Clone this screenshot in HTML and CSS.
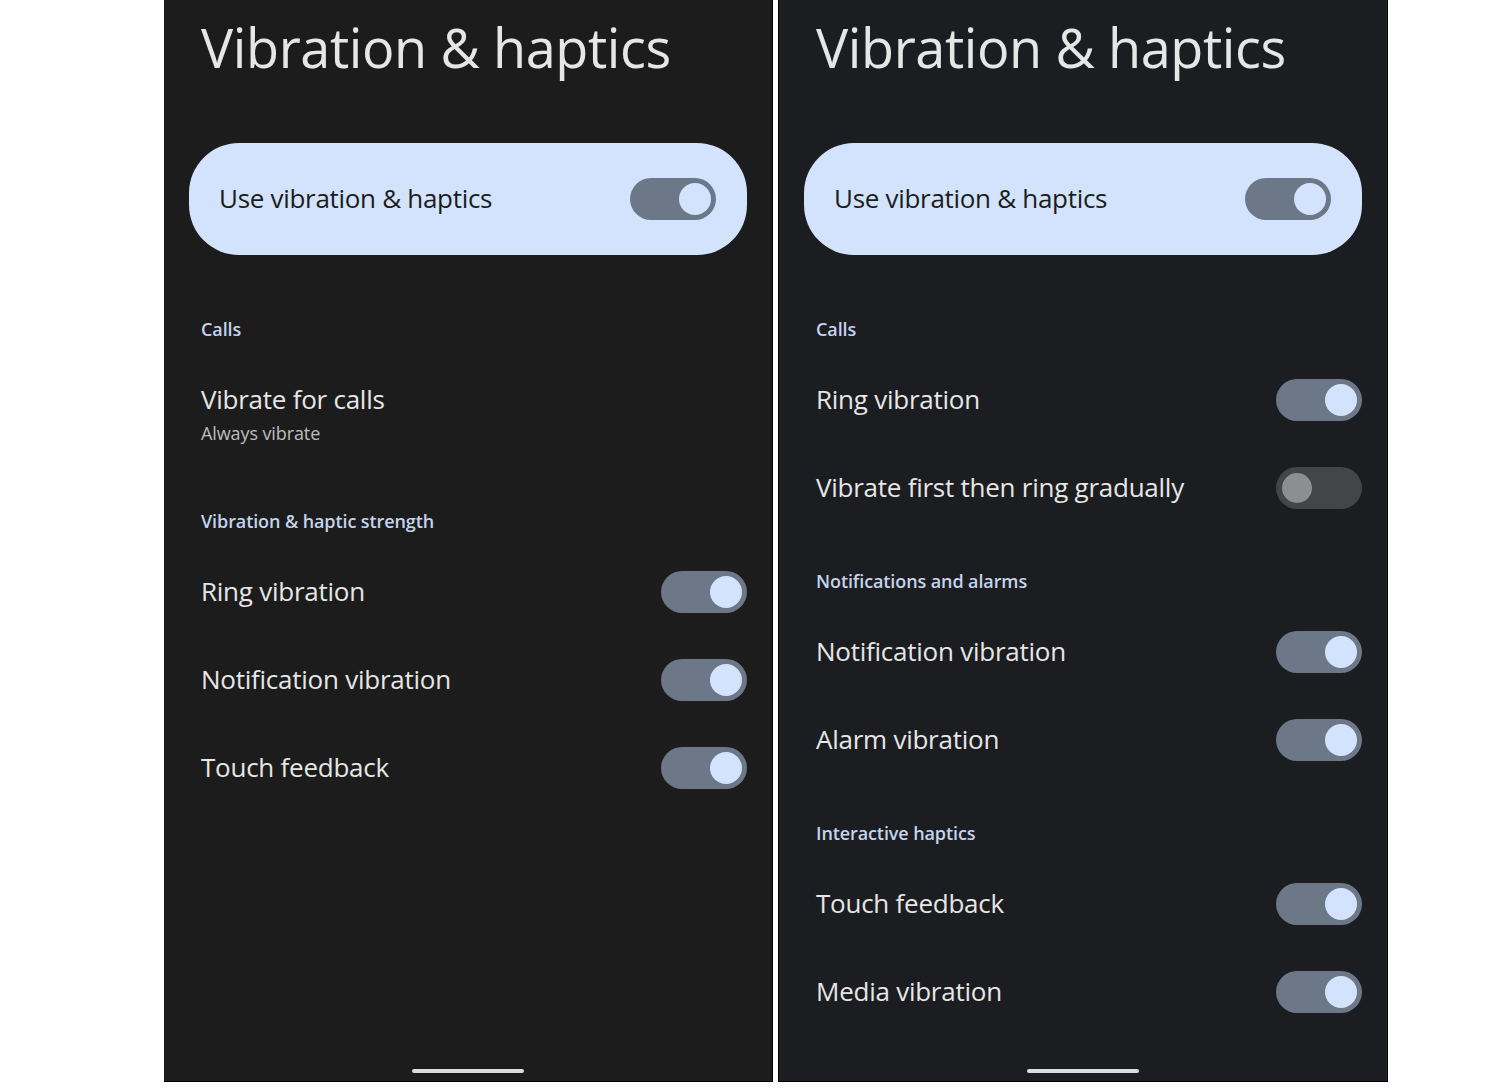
FILE: index.html
```html
<!DOCTYPE html>
<html>
<head>
<meta charset="utf-8">
<link rel="stylesheet" href="styles.css">
</head>
<body>
<div class="screens">
  <section class="phone phone-a">
    <h1 class="title">Vibration &amp; haptics</h1>
    <div class="main-card">
      <span class="main-label">Use vibration &amp; haptics</span>
      <span class="switch on"><span class="thumb"></span></span>
    </div>
    <div class="header">Calls</div>
    <div class="row two-line">
      <div class="row-title">Vibrate for calls</div>
      <div class="row-sub">Always vibrate</div>
    </div>
    <div class="header">Vibration &amp; haptic strength</div>
    <div class="row"><span class="row-title">Ring vibration</span><span class="switch on"><span class="thumb"></span></span></div>
    <div class="row"><span class="row-title">Notification vibration</span><span class="switch on"><span class="thumb"></span></span></div>
    <div class="row"><span class="row-title">Touch feedback</span><span class="switch on"><span class="thumb"></span></span></div>
    <div class="home-bar"></div>
  </section>
  <section class="phone phone-b">
    <h1 class="title">Vibration &amp; haptics</h1>
    <div class="main-card">
      <span class="main-label">Use vibration &amp; haptics</span>
      <span class="switch on"><span class="thumb"></span></span>
    </div>
    <div class="header">Calls</div>
    <div class="row"><span class="row-title">Ring vibration</span><span class="switch on"><span class="thumb"></span></span></div>
    <div class="row"><span class="row-title">Vibrate first then ring gradually</span><span class="switch off"><span class="thumb"></span></span></div>
    <div class="header">Notifications and alarms</div>
    <div class="row"><span class="row-title">Notification vibration</span><span class="switch on"><span class="thumb"></span></span></div>
    <div class="row"><span class="row-title">Alarm vibration</span><span class="switch on"><span class="thumb"></span></span></div>
    <div class="header">Interactive haptics</div>
    <div class="row"><span class="row-title">Touch feedback</span><span class="switch on"><span class="thumb"></span></span></div>
    <div class="row"><span class="row-title">Media vibration</span><span class="switch on"><span class="thumb"></span></span></div>
    <div class="home-bar"></div>
  </section>
</div>
</body>
</html>
```

FILE: styles.css
```css
* { box-sizing: border-box; }
html, body { margin: 0; padding: 0; background: #ffffff; }
body { font-family: "Open Sans", "Noto Sans", sans-serif; }

.screens {
  display: flex;
  gap: 5px;
  padding-left: 164px;
}

.phone {
  width: 609px;
  height: 1082px;
  display: flex;
  flex-direction: column;
  border-right: 1px solid #000;
  border-bottom: 1px solid #000;
  background: #1c1c1c;
}
.phone-b { background: #1b1d20; border-left: 1px solid #000; width: 610px; }

.title {
  margin: 0 0 64px 0;
  padding: 15px 0 0 37px;
  font-size: 54px;
  line-height: 64px;
  font-weight: 400;
  color: #e6e6e6;
  letter-spacing: -0.4px;
}

.main-card {
  margin: 0 25px 25px 25px;
  height: 112px;
  border-radius: 50px;
  background: #d3e3fd;
  display: flex;
  align-items: center;
  justify-content: space-between;
  padding: 0 31px 0 30px;
}
.main-label {
  font-size: 26px;
  line-height: 32px;
  margin-top: -2px;
  color: #1b1c1e;
  letter-spacing: -0.3px;
}

.header {
  padding: 37px 37px 15px 37px;
  font-size: 18px;
  line-height: 24px;
  font-weight: 600;
  color: #c3d4ef;
  letter-spacing: -0.1px;
}

.row {
  height: 88px;
  display: flex;
  align-items: center;
  justify-content: space-between;
  padding: 0 25px 0 37px;
}
.row-title {
  font-size: 26px;
  line-height: 32px;
  margin-top: -2px;
  color: #e6e6e6;
  letter-spacing: -0.25px;
}
.row.two-line {
  height: 116px;
  flex-direction: column;
  align-items: flex-start;
  justify-content: flex-start;
  padding-top: 29px;
}
.row-sub {
  margin-top: 8px;
  font-size: 18px;
  line-height: 20px;
  color: #bdbdbd;
  letter-spacing: -0.1px;
}

.switch {
  position: relative;
  width: 86px;
  height: 42px;
  border-radius: 21px;
  display: flex;
  align-items: center;
  flex-shrink: 0;
}
.switch.on { background: #6c7788; justify-content: flex-end; padding-right: 5px; }
.switch.off { background: #444548; justify-content: flex-start; padding-left: 6px; }
.switch .thumb { border-radius: 50%; display: block; }
.switch.on .thumb { width: 32px; height: 32px; background: #d4e3fd; }
.switch.off .thumb { width: 30px; height: 30px; background: #8d8e90; }

.home-bar {
  margin: auto auto 8px auto;
  width: 112px;
  height: 4px;
  border-radius: 2px;
  background: #dcdcdc;
}
```
